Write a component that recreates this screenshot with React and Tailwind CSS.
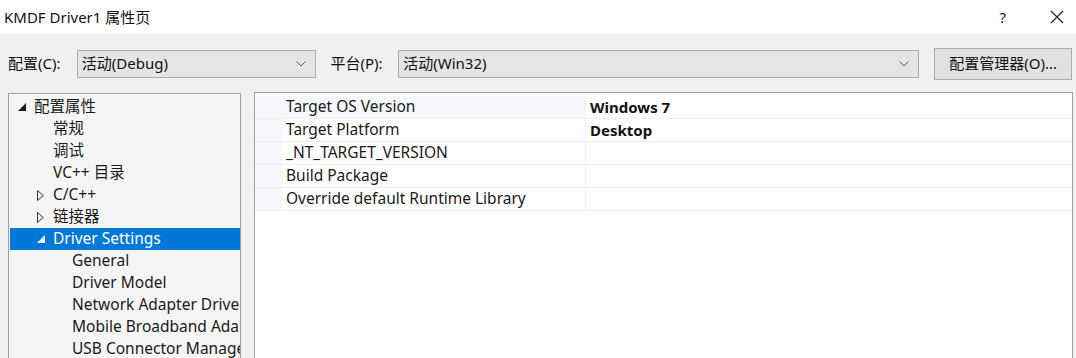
import React from "react";

const font = { fontFamily: '"Noto Sans", "Noto Sans CJK SC", sans-serif' };

function Chevron() {
  return (
    <svg width="10" height="6" viewBox="0 0 10 6" className="shrink-0">
      <path d="M0.5 0.5 L5 5 L9.5 0.5" fill="none" stroke="#555" strokeWidth="1" />
    </svg>
  );
}

function Combo({ value, className }) {
  return (
    <div
      className={`h-[28px] flex items-center justify-between pl-[4px] pr-[9px] bg-[#e5e5e5] border border-[#a6adb8] ${className}`}
    >
      <span className="text-[15px] text-[#111]">{value}</span>
      <Chevron />
    </div>
  );
}

function TreeRow({ indent, arrow, label, selected }) {
  return (
    <div
      className={`h-[22px] flex items-center text-[15.5px] whitespace-nowrap ${
        selected ? "bg-[#0078d7] text-white" : "text-[#1a1a1a]"
      }`}
      style={{ paddingLeft: indent }}
    >
      <span className="w-[16px] shrink-0 flex items-center">
        {arrow === "open" && (
          <svg width="8" height="8" viewBox="0 0 8 8">
            <path d="M8 0 L8 8 L0 8 Z" fill={selected ? "#fff" : "#1a1a1a"} />
          </svg>
        )}
        {arrow === "closed" && (
          <svg width="7" height="11" viewBox="0 0 7 11">
            <path d="M0.5 0.5 L6.3 5.5 L0.5 10.5 Z" fill="none" stroke="#333" strokeWidth="1" />
          </svg>
        )}
      </span>
      <span className="shrink-0">{label}</span>
    </div>
  );
}

const tree = [
  { indent: 8, arrow: "open", label: "配置属性" },
  { indent: 27, label: "常规" },
  { indent: 27, label: "调试" },
  { indent: 27, label: "VC++ 目录" },
  { indent: 27, arrow: "closed", label: "C/C++" },
  { indent: 27, arrow: "closed", label: "链接器" },
  { indent: 27, arrow: "open", label: "Driver Settings", selected: true },
  { indent: 46, label: "General" },
  { indent: 46, label: "Driver Model" },
  { indent: 46, label: "Network Adapter Driver" },
  { indent: 46, label: "Mobile Broadband Adapter" },
  { indent: 46, label: "USB Connector Manager" },
];

const props = [
  ["Target OS Version", "Windows 7"],
  ["Target Platform", "Desktop"],
  ["_NT_TARGET_VERSION", ""],
  ["Build Package", ""],
  ["Override default Runtime Library", ""],
];

export default function App() {
  return (
    <div className="w-[1076px] h-[358px] overflow-hidden bg-[#f0f0f0] flex flex-col" style={font}>
      <div className="h-[34px] bg-white flex items-center pl-[4px] shrink-0">
        <span className="text-[15px] text-[#111] flex-1">KMDF Driver1 属性页</span>
        <span className="text-[15px] text-[#222] mr-[44px]">?</span>
        <svg width="14" height="14" viewBox="0 0 14 14" className="mr-[12px]">
          <path d="M1 1 L13 13 M13 1 L1 13" stroke="#222" strokeWidth="1.2" />
        </svg>
      </div>

      <div className="h-[59px] flex items-center pl-[8px] pr-[4px] shrink-0">
        <span className="text-[15px] text-[#111] w-[69px]">配置(C):</span>
        <Combo value="活动(Debug)" className="w-[240px]" />
        <span className="text-[15px] text-[#111] ml-[14px] w-[68px]">平台(P):</span>
        <Combo value="活动(Win32)" className="w-[522px]" />
        <div className="ml-[15px] w-[138px] h-[32px] bg-[#e1e1e1] border border-[#adadad] flex items-center justify-center text-[15px] text-[#111]">
          配置管理器(O)...
        </div>
      </div>

      <div className="flex flex-1 pl-[8px] pr-[3px]">
        <div className="w-[233px] border border-[#a0a0a0] border-b-0 bg-[#f5f5f5] pt-[2px] pl-[1px] overflow-hidden">
          {tree.map((t, i) => (
            <TreeRow key={i} {...t} />
          ))}
        </div>
        <div className="ml-[13px] flex-1 border border-[#a0a0a0] border-b-0 bg-white mt-[-1px] pt-[3px]">
          <div className="flex flex-col">
            {props.map(([name, value], i) => (
              <div key={i} className="flex h-[23px] border-b border-[#eef0f5]">
                <div className="w-[28px] bg-[#f5f7fa]" />
                <div
                  className={`w-[303px] flex items-center pl-[3px] text-[15.5px] text-[#1a1a1a] border-r border-[#eef0f5] ${
                    i === 0 ? "bg-[#f5f7fa]" : ""
                  }`}
                >
                  {name}
                </div>
                <div className="flex-1 flex items-center pl-[4px] text-[15px] font-bold text-[#111]">
                  {value}
                </div>
              </div>
            ))}
          </div>
        </div>
      </div>
    </div>
  );
}
